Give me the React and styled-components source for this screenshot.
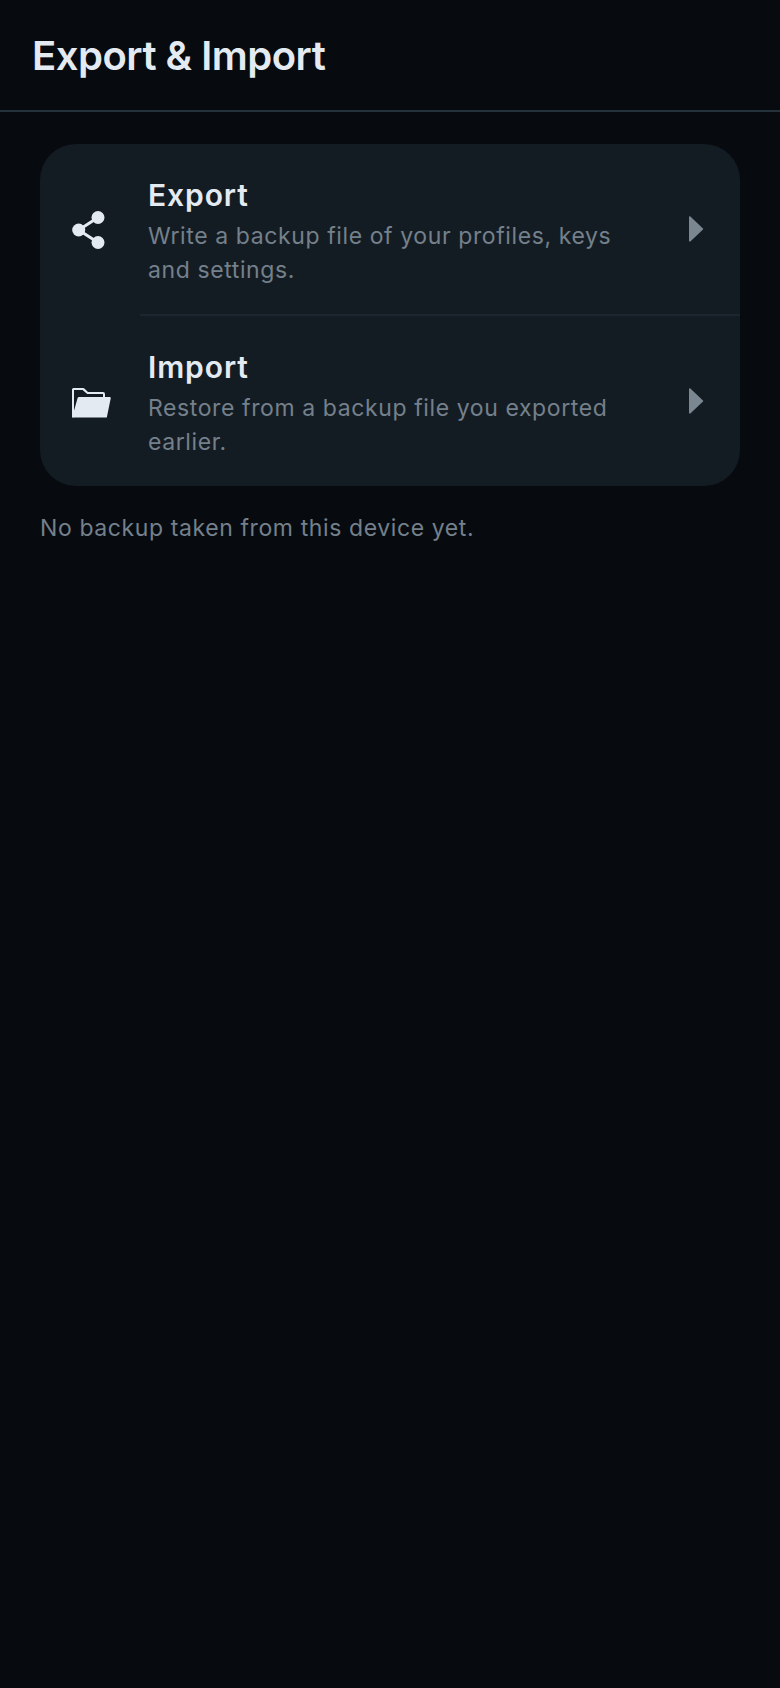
import React from 'react';
import styled, { createGlobalStyle } from 'styled-components';

const GlobalStyle = createGlobalStyle`
  html, body {
    margin: 0;
    background: #070b10;
  }
  body {
    font-family: Inter, "Noto Sans", sans-serif;
  }
`;

function ShareIcon() {
  return (
    <svg width="36" height="42" viewBox="0 0 36 42" fill="#e4eaf2">
      <circle cx="26" cy="9.500" r="6.500" />
      <circle cx="6.700" cy="22" r="6.500" />
      <circle cx="26" cy="34.500" r="6.500" />
      <path d="M26 9.500 6.700 22 26 34.500" fill="none" stroke="#e4eaf2" strokeWidth="3" />
    </svg>
  );
}

function FolderIcon() {
  return (
    <svg width="39" height="33" viewBox="0 -3 39 33" fill="#e4eaf2">
      <path d="M0 1.500A1.500 1.500 0 0 1 1.500 0H11a2 2 0 0 1 1.400.600L16 4h15a2 2 0 0 1 2 2v3h-2V6H15.200L10.600 2H2v27.500H0z" />
      <path d="M1.500 29.500V24.500L5.600 10a1.500 1.500 0 0 1 1.400-1H37.500a1.200 1.200 0 0 1 1.200 1.500L34.800 29.500z" />
    </svg>
  );
}

function Chevron() {
  return (
    <svg width="15" height="26" viewBox="0 0 15 26" fill="#7a8791">
      <path d="M0 1.500C0 .500.900 0 1.600.700L14 12.400a.900.900 0 0 1 0 1.200L1.600 25.300C.900 26 0 25.500 0 24.500z" />
    </svg>
  );
}

function Row({ icon, title, text }) {
  return (
    <RowBox>
      <IconSlot>{icon}</IconSlot>
      <RowText>
        <RowTitle>{title}</RowTitle>
        <RowDesc>{text}</RowDesc>
      </RowText>
      <ChevronSlot><Chevron /></ChevronSlot>
    </RowBox>
  );
}

export default function App() {
  return (
    <Page>
      <GlobalStyle />
      <Header>
        <Title>Export &amp; Import</Title>
      </Header>
      <Content>
        <Card>
          <Row
            icon={<ShareIcon />}
            title="Export"
            text="Write a backup file of your profiles, keys and settings."
          />
          <Divider />
          <Row
            icon={<FolderIcon />}
            title="Import"
            text="Restore from a backup file you exported earlier."
          />
        </Card>
        <Note>No backup taken from this device yet.</Note>
      </Content>
    </Page>
  );
}

// STYLES
const Page = styled.div`
  width: 780px;
  height: 1688px;
  background: #070b10;
  overflow: hidden;
`;

const Header = styled.header`
  height: 110px;
  border-bottom: 2px solid #263239;
  display: flex;
  align-items: center;
  padding: 0 32px;
`;

const Title = styled.h1`
  margin: 0;
  font-size: 40px;
  font-weight: 600;
  letter-spacing: -0.5px;
  color: #e4eaf2;
`;

const Content = styled.main`
  padding: 32px 40px 0;
`;

const Card = styled.section`
  background: #141c23;
  border-radius: 36px;
  overflow: hidden;
`;

const Divider = styled.div`
  height: 2px;
  margin-left: 100px;
  background: #1b2630;
`;

const RowBox = styled.div`
  display: flex;
  align-items: center;
  height: 170px;
`;

const IconSlot = styled.div`
  width: 108px;
  padding-left: 32px;
  box-sizing: border-box;
  display: flex;
  align-items: center;
`;

const RowText = styled.div`
  flex: 1;
  min-width: 0;
  padding: 4px 60px 0 0;
`;

const RowTitle = styled.div`
  font-size: 30px;
  line-height: 40px;
  font-weight: 600;
  letter-spacing: 0.9px;
  color: #e4eaf2;
`;

const RowDesc = styled.div`
  margin-top: 5px;
  font-size: 23px;
  line-height: 33.5px;
  letter-spacing: 0.6px;
  color: #74808b;
`;

const ChevronSlot = styled.div`
  width: 52px;
  padding-left: 1px;
  box-sizing: border-box;
  display: flex;
  align-items: center;
`;

const Note = styled.p`
  margin: 26px 0 0;
  font-size: 23px;
  line-height: 33px;
  letter-spacing: 0.6px;
  color: #74808b;
`;
